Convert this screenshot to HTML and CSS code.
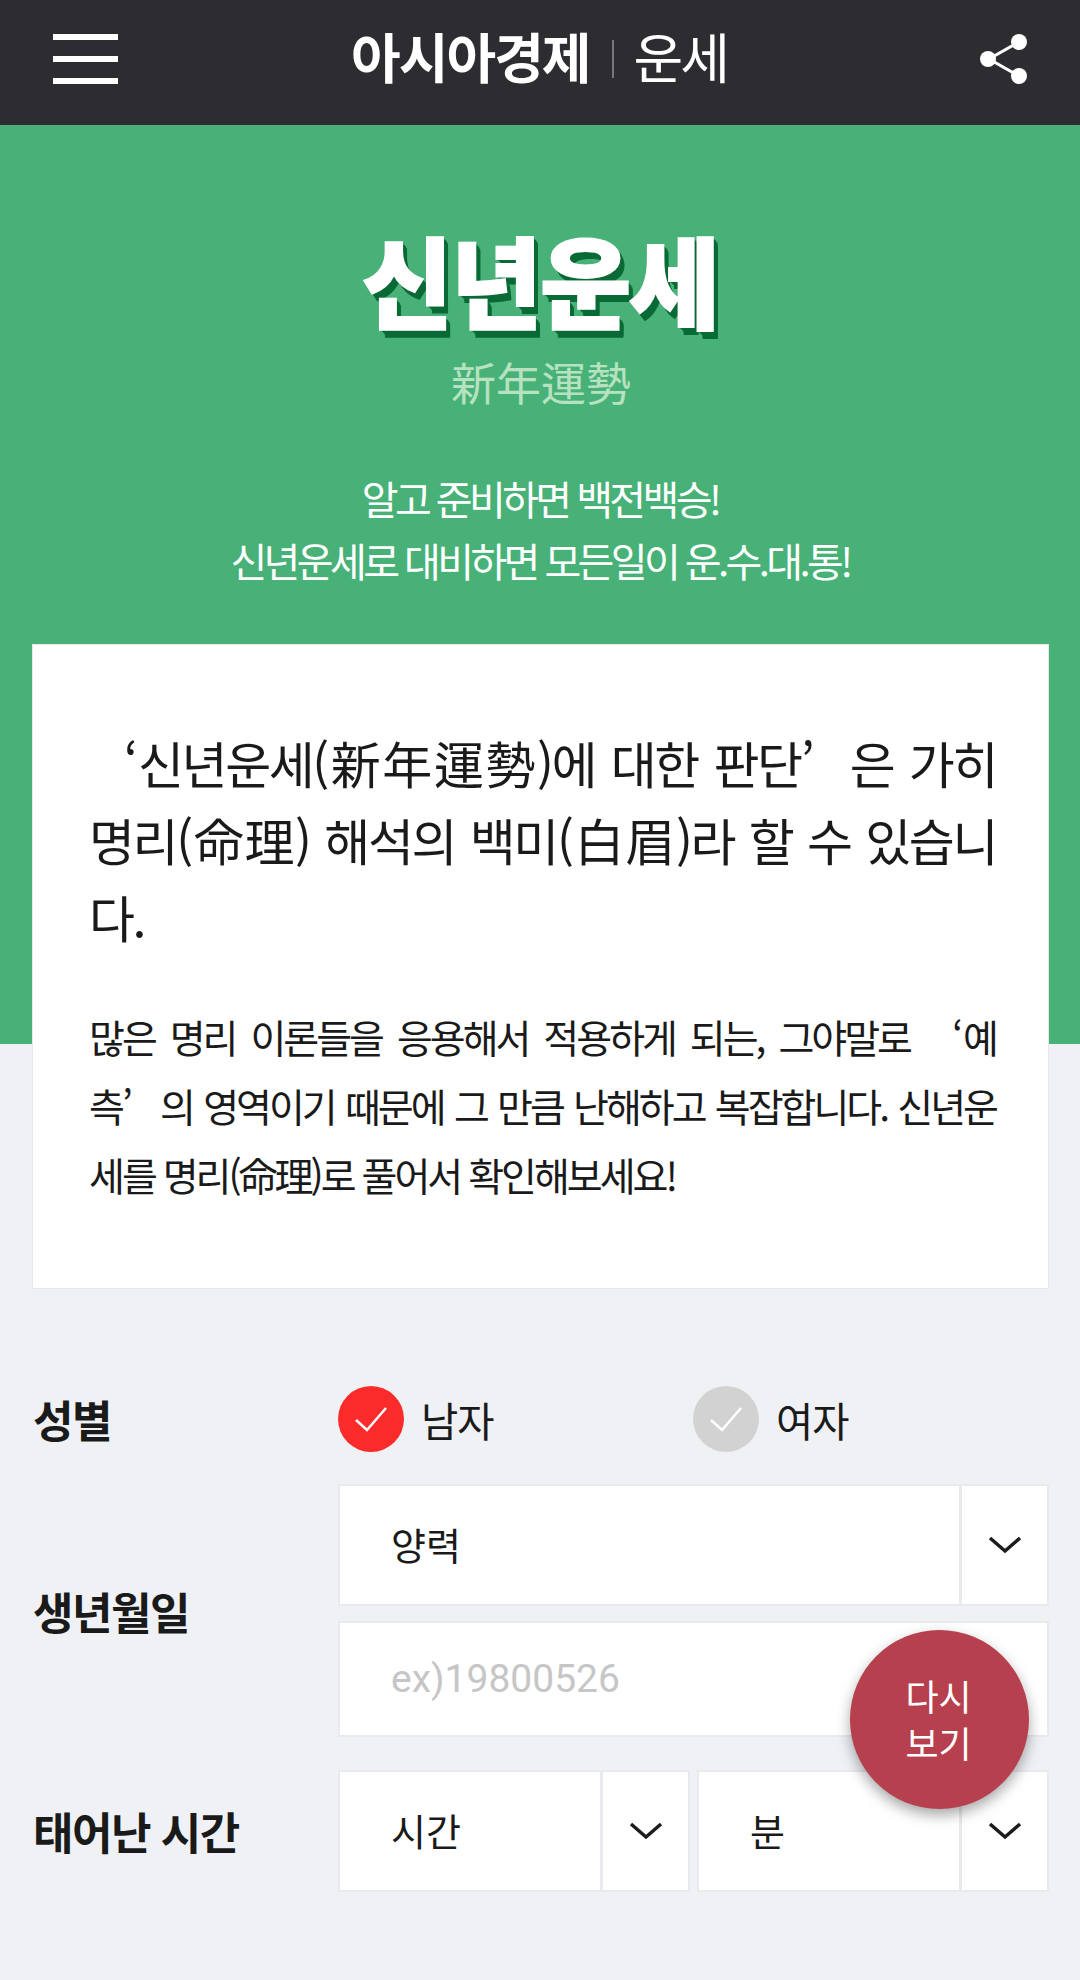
FILE: index.html
```html
<!DOCTYPE html>
<html lang="ko">
<head>
    <meta charset="UTF-8">
    <meta name="viewport" content="width=device-width, initial-scale=1.0">
    <title>신년운세</title>
    <link rel="stylesheet" href="styles.css">
</head>
<body>
    <header class="top-bar">
        <div class="menu-btn"><span></span><span></span><span></span></div>
        <div class="logo">
            <span class="logo-main">아시아경제</span>
            <span class="logo-sep"></span>
            <span class="logo-sub">운세</span>
        </div>
        <svg class="share-icon" width="52" height="54" viewBox="0 0 52 54">
            <path d="M41 10 L11 27 L41 44" fill="none" stroke="#fff" stroke-width="3"/>
            <circle cx="41" cy="10" r="8" fill="#fff"/>
            <circle cx="10" cy="27" r="8" fill="#fff"/>
            <circle cx="41" cy="44" r="8" fill="#fff"/>
        </svg>
    </header>

    <section class="hero">
        <h1 class="hero-title">신년운세</h1>
        <p class="hero-hanja">新年運勢</p>
        <p class="hero-desc">알고 준비하면 백전백승!<br>신년운세로 대비하면 모든일이 운.수.대.통!</p>
    </section>

    <section class="intro-card">
        <p class="intro-lead"><span class="quote-open">‘</span>신년운세(新年運勢)에 대한 판단<span class="quote-close">’</span>은 가히 명리(命理) 해석의 백미(白眉)라 할 수 있습니다.</p>
        <p class="intro-text">많은 명리 이론들을 응용해서 적용하게 되는, 그야말로 <span class="quote-open">‘</span>예<span class="keep">측<span class="quote-close">’</span></span>의 영역이기 때문에 그 만큼 난해하고 복잡합니다. 신년운세를 명리(命理)로 풀어서 확인해보세요!</p>
    </section>

    <form class="saju-form">
        <div class="form-row gender-row">
            <div class="form-label">성별</div>
            <div class="gender-options">
                <div class="gender-item">
                    <span class="check on"><svg width="38" height="30" viewBox="0 0 38 30"><path d="M4 16 L15 26 L34 4" fill="none" stroke="#fff" stroke-width="2.5"/></svg></span>
                    남자
                </div>
                <div class="gender-item">
                    <span class="check"><svg width="38" height="30" viewBox="0 0 38 30"><path d="M4 16 L15 26 L34 4" fill="none" stroke="#fff" stroke-width="2.5"/></svg></span>
                    여자
                </div>
            </div>
        </div>

        <div class="form-row birth-row">
            <div class="form-label">생년월일</div>
            <div class="birth-fields">
                <div class="select-box">
                    <span class="select-value">양력</span>
                    <span class="select-arrow"><svg width="34" height="20" viewBox="0 0 34 20"><path d="M2 3 L17 16 L32 3" fill="none" stroke="#1c1c1c" stroke-width="3.5"/></svg></span>
                </div>
                <div class="text-box">ex)19800526</div>
            </div>
        </div>

        <div class="form-row time-row">
            <div class="form-label">태어난 시간</div>
            <div class="time-fields">
                <div class="select-box hour">
                    <span class="select-value">시간</span>
                    <span class="select-arrow"><svg width="34" height="20" viewBox="0 0 34 20"><path d="M2 3 L17 16 L32 3" fill="none" stroke="#1c1c1c" stroke-width="3.5"/></svg></span>
                </div>
                <div class="select-box minute">
                    <span class="select-value">분</span>
                    <span class="select-arrow"><svg width="34" height="20" viewBox="0 0 34 20"><path d="M2 3 L17 16 L32 3" fill="none" stroke="#1c1c1c" stroke-width="3.5"/></svg></span>
                </div>
            </div>
        </div>
    </form>

    <div class="fab">다시<br>보기</div>
</body>
</html>
```

FILE: styles.css
```css
* {
    box-sizing: border-box;
}
html, body {
    margin: 0;
    padding: 0;
}
body {
    position: relative;
    width: 1080px;
    height: 1980px;
    overflow: hidden;
    background-color: #eff1f5;
    color: #1a1a1a;
    font-family: "Noto Sans CJK KR", "Noto Sans", sans-serif;
}
p, h1 {
    margin: 0;
}

.top-bar {
    height: 125px;
    padding: 0 50px 0 53px;
    background-color: #2c2c31;
    display: flex;
    align-items: center;
    justify-content: space-between;
}
.menu-btn {
    width: 65px;
    height: 50px;
    margin-top: -8px;
    display: flex;
    flex-direction: column;
    justify-content: space-between;
}
.menu-btn span {
    height: 6px;
    background-color: #fff;
}
.logo {
    display: flex;
    align-items: center;
    color: #fff;
    margin: -14px 0 0 -18px;
}
.logo-main {
    font-size: 54px;
    font-weight: 700;
    letter-spacing: -2px;
    line-height: 60px;
}
.logo-sep {
    width: 2px;
    height: 38px;
    margin: 6px 20px 0 22px;
    background-color: #77777b;
}
.logo-sub {
    font-size: 54px;
    font-weight: 400;
    letter-spacing: -3px;
    line-height: 60px;
}
.share-icon {
    margin-top: -8px;
}

.hero {
    height: 919px;
    padding-top: 88px;
    background-color: #47b177;
    text-align: center;
}
.hero-title {
    font-size: 99px;
    font-weight: 900;
    line-height: 130px;
    letter-spacing: -2px;
    color: #fff;
    -webkit-text-stroke: 2px #fff;
    text-shadow: 1px 1px 0 #0a6a35, 2px 2px 0 #0a6a35, 3px 3px 0 #0a6a35, 4px 4px 0 #0a6a35, 5px 6px 0 #0a6a35, 5px 8px 0 #0a6a35;
}
.hero-hanja {
    font-size: 45px;
    font-weight: 400;
    line-height: 60px;
    margin: 9px 0 0 2px;
    color: #b6e2c0;
}
.hero-desc {
    margin-top: 55px;
    font-size: 40px;
    line-height: 62px;
    letter-spacing: -3.6px;
    color: #fff;
}

.intro-card {
    position: relative;
    width: 1017px;
    height: 645px;
    margin: -400px 0 0 32px;
    padding: 79px 52px 0 56px;
    background-color: #fff;
    border: 1px solid #e6e8ec;
}
.quote-open {
    padding-left: 0.7em;
    letter-spacing: 0;
}
.quote-close {
    padding-right: 0.7em;
    letter-spacing: 0;
}
.keep {
    white-space: nowrap;
}
.intro-lead {
    font-size: 50px;
    line-height: 77px;
    letter-spacing: -2.4px;
    text-align: justify;
    word-break: break-all;
}
.intro-text {
    margin-top: 47px;
    font-size: 39px;
    line-height: 69px;
    letter-spacing: -3px;
    text-align: justify;
    word-break: break-all;
}

.saju-form {
    padding: 97px 31px 0 33px;
}
.form-row {
    display: flex;
    align-items: center;
}
.form-label {
    width: 305px;
    flex: none;
    font-size: 44px;
    font-weight: 700;
    letter-spacing: -1.5px;
}
.gender-options {
    flex: 1;
    display: flex;
}
.gender-item {
    width: 355px;
    display: flex;
    align-items: center;
    gap: 17px;
    font-size: 40.5px;
    letter-spacing: -1px;
}
.check {
    width: 66px;
    height: 66px;
    border-radius: 50%;
    background-color: #d2d2d2;
    display: flex;
    align-items: center;
    justify-content: center;
}
.check.on {
    background-color: #fb2b2b;
}
.birth-row {
    margin-top: 32px;
}
.birth-fields {
    flex: 1;
    display: flex;
    flex-direction: column;
    gap: 15px;
}
.select-box {
    height: 122px;
    background-color: #fff;
    border: 2px solid #e8eaee;
    display: flex;
}
.select-value {
    flex: 1;
    padding-left: 51px;
    font-size: 38px;
    line-height: 115px;
}
.select-arrow {
    width: 88px;
    border-left: 3px solid #e8eaee;
    display: flex;
    align-items: center;
    justify-content: center;
}
.text-box {
    height: 116px;
    padding-left: 51px;
    background-color: #fff;
    border: 2px solid #e8eaee;
    font-family: Roboto, sans-serif;
    font-size: 39px;
    line-height: 112px;
    color: #c6c6c6;
}
.time-row {
    margin-top: 33px;
}
.time-fields {
    flex: 1;
    display: flex;
    gap: 7px;
}
.select-box.hour {
    width: 352px;
}
.select-box.minute {
    flex: 1;
}

.fab {
    position: absolute;
    left: 850px;
    top: 1630px;
    width: 179px;
    height: 179px;
    padding: 42px 2px 0 0;
    border-radius: 50%;
    background-color: #b7404e;
    box-shadow: 0 6px 14px rgba(0,0,0,0.35);
    color: #fff;
    font-size: 36px;
    line-height: 47px;
    text-align: center;
}
```
